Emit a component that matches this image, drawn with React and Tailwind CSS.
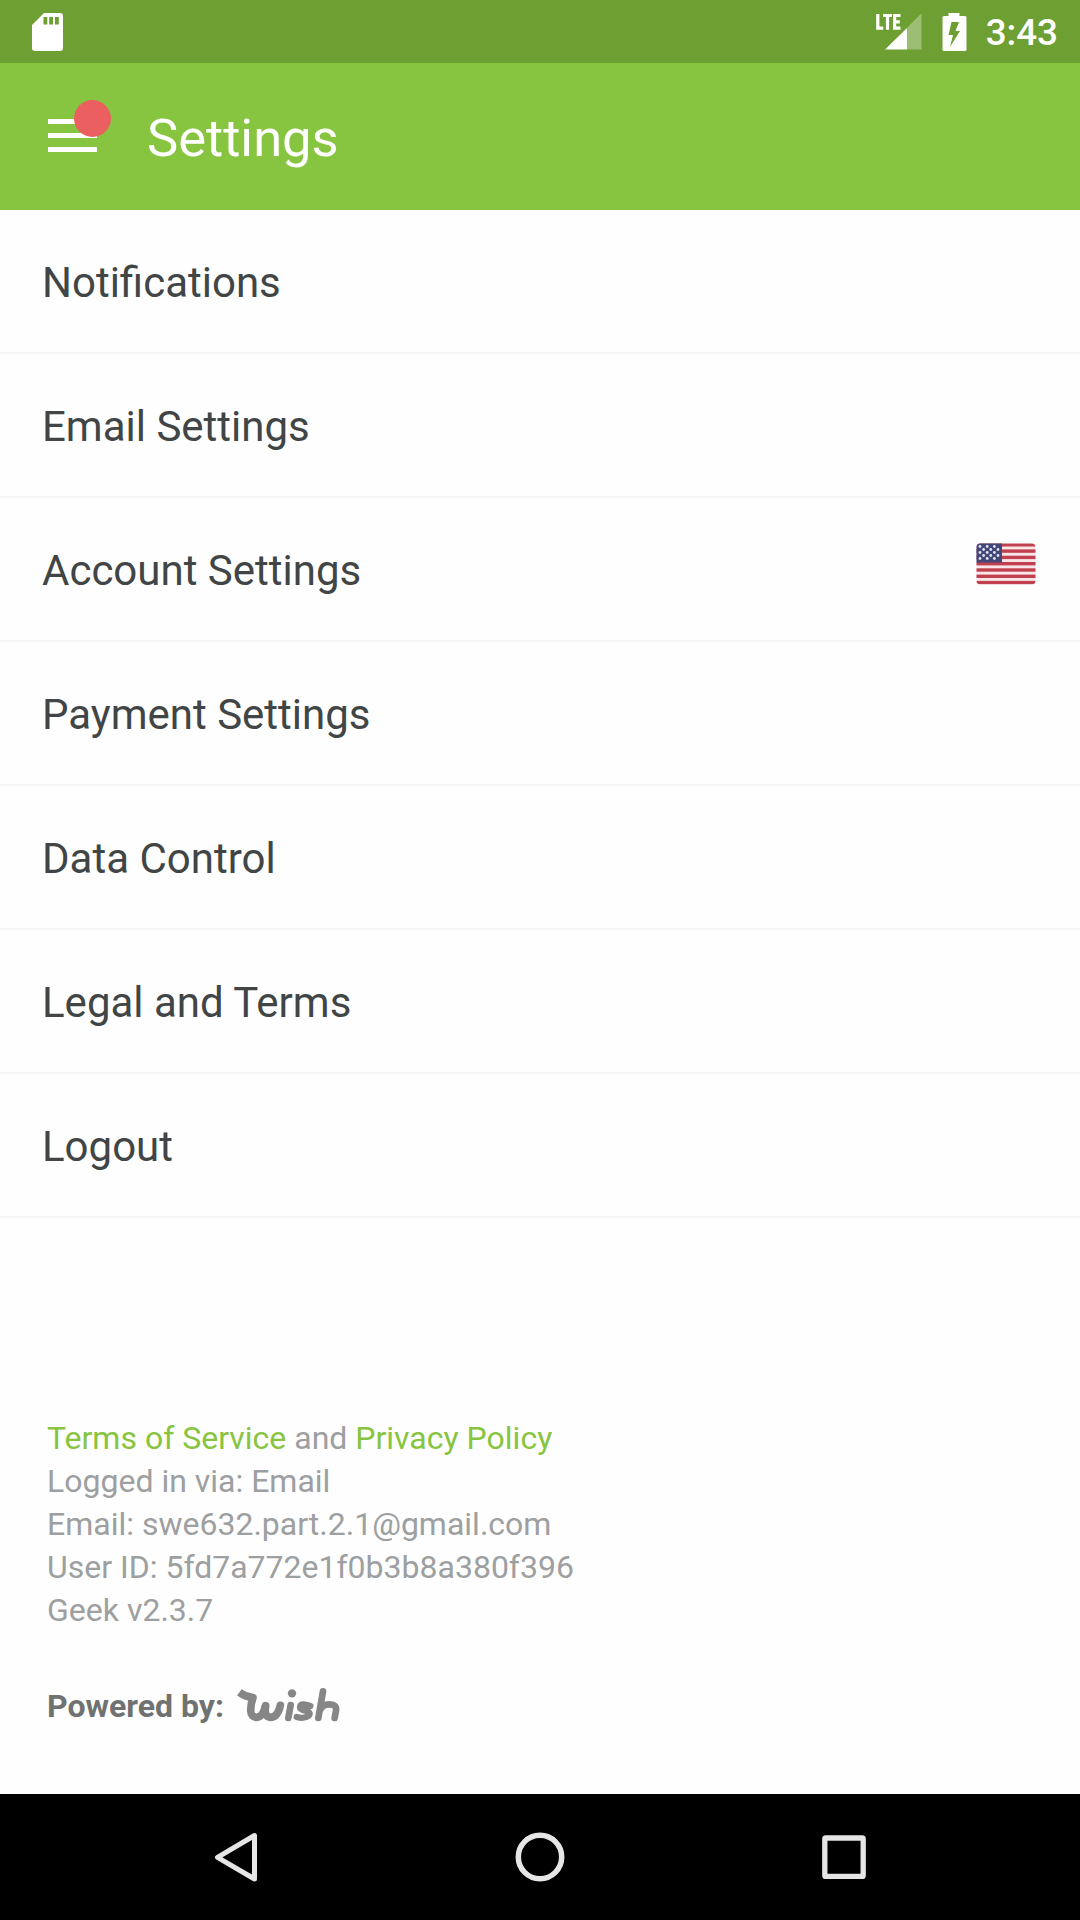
const rows = [
  { label: 'Notifications' },
  { label: 'Email Settings' },
  { label: 'Account Settings', flag: true },
  { label: 'Payment Settings' },
  { label: 'Data Control' },
  { label: 'Legal and Terms' },
  { label: 'Logout' },
];

function SdCard() {
  return (
    <svg className="ml-8 h-[38px] w-[31px]" viewBox="0 0 31 38">
      <path
        fill="#fff"
        fillRule="evenodd"
        d="M12 0H28Q31 0 31 3V35Q31 38 28 38H3Q0 38 0 35V12ZM11.5 4V11.5H15.3V4ZM17.2 4V11.5H21V4ZM23 4V11.5H26.8V4Z"
      />
    </svg>
  );
}

function Signal() {
  return (
    <svg className="h-[37px] w-[46px]" viewBox="0 0 46 37">
      <path fill="#fff" d="M9 36.500L31 15V36.500Z" />
      <path fill="#fff" fillOpacity="0.32" d="M31 15L45.500 0V36.500H31Z" />
      <g stroke="#fff" strokeWidth="3.2" fill="none">
        <path d="M1.800 1V15.200H7.300M7 2.500H16M11.500 2.500V16.800M18.600 1V16.800M18.600 2.500H24.500M18.600 8.800H23.800M18.600 15.200H24.500" />
      </g>
    </svg>
  );
}

function Battery() {
  return (
    <svg className="ml-[20px] h-[38px] w-[25px]" viewBox="0 0 25 38">
      <path
        fill="#fff"
        fillRule="evenodd"
        d="M6.500 0H17.500V3H23Q24.500 3 24.500 4.500V36.500Q24.500 38 23 38H2Q0.500 38 0.500 36.500V4.500Q0.500 3 2 3H6.500ZM9.500 9L6.500 22H11L8 34L18 18H13.500L17 9Z"
      />
    </svg>
  );
}

function Flag() {
  const stars = [];
  for (let r = 0; r < 5; r++) {
    for (let c = 0; c < 6; c++) {
      if ((r + c) % 2 === 0) stars.push([4 + c * 3.6, 3.5 + r * 3]);
    }
  }
  return (
    <svg className="mb-[10px] h-[42px] w-[60px]" viewBox="0 0 60 42">
      <defs>
        <clipPath id="flagShape">
          <rect width="59" height="41" x="0.500" y="0.500" rx="4" />
        </clipPath>
      </defs>
      <g clipPath="url(#flagShape)">
        <rect width="60" height="42" fill="#f8e6e8" />
        {[0, 1, 2, 3, 4, 5, 6].map((i) => (
          <rect key={i} y={i * 6.3 + 0.1} width="60" height="3.4" fill="#c0404f" />
        ))}
        <rect width="26" height="19.500" fill="#424777" />
        {stars.map(([x, y], i) => (
          <circle key={i} cx={x} cy={y} r="1.400" fill="#dfe3f0" />
        ))}
      </g>
    </svg>
  );
}

function WishLogo() {
  return (
    <svg className="mb-[3px] ml-[13px] h-[36px] w-[104px]" viewBox="51 50 312 108">
      <g fill="none" stroke="#868686" strokeWidth="23" strokeLinecap="round" strokeLinejoin="round">
        <path strokeLinecap="butt" d="M58 66Q76 79 99 82Q92 100 92 121Q93 142 112 141Q130 138 136 106" />
        <path d="M137 106Q131 139 151 141Q173 141 181 105" />
        <path strokeWidth="20" d="M212 104L205 143" />
        <path strokeWidth="19" d="M271 107Q241 96 240 111Q240 118 256 121Q275 126 266 136Q253 147 230 140" />
        <path strokeWidth="20" d="M309 63L295 143M299 122Q306 102 328 102Q351 102 348 121L344 143" />
      </g>
      <circle cx="216" cy="69" r="12.500" fill="#868686" />
    </svg>
  );
}

function NavBar() {
  return (
    <nav className="flex h-[126px] items-center bg-black pl-[214px]">
      <svg className="h-[52px] w-[46px]" viewBox="0 0 46 52" fill="none" stroke="#e6e6e6" strokeWidth="5" strokeLinejoin="round">
        <path d="M40.500 4.500V48L3.500 26.300Z" />
      </svg>
      <svg className="ml-[254px] h-[52px] w-[52px]" viewBox="0 0 52 52" fill="none" stroke="#e6e6e6" strokeWidth="5.500">
        <circle cx="26" cy="26" r="21.700" />
      </svg>
      <svg className="ml-[254px] h-[52px] w-[52px]" viewBox="0 0 52 52" fill="none" stroke="#e6e6e6" strokeWidth="5.300" strokeLinejoin="round">
        <rect x="4.800" y="7" width="38.400" height="38.400" rx="1" />
      </svg>
    </nav>
  );
}

export default function App() {
  return (
    <div className="flex h-[1920px] w-[1080px] flex-col overflow-hidden bg-[#fefefe] font-['Roboto',sans-serif]">
      <div className="flex h-[63px] items-center justify-between bg-[#6d9f32]">
        <SdCard />
        <div className="flex items-center pr-[22px] text-white">
          <Signal />
          <Battery />
          <span className="ml-[19px] pt-[4px] text-[36.75px] leading-none font-medium">3:43</span>
        </div>
      </div>
      <header className="flex h-[147px] items-center bg-[#87c440] pl-12 text-white">
        <div className="relative mb-[2px] flex w-[49px] flex-col gap-[9px]">
          <span className="h-[5px] bg-white" />
          <span className="h-[5px] bg-white" />
          <span className="h-[5px] bg-white" />
          <span className="absolute -top-[19px] left-[26px] size-[37px] rounded-full bg-[#ec5f60]" />
        </div>
        <h1 className="ml-[50px] pt-[3px] text-[52.5px] leading-none">Settings</h1>
      </header>
      <ul>
        {rows.map((row) => (
          <li
            key={row.label}
            className="flex h-[144px] items-center justify-between border-b-2 border-[#f4f5f5] pr-[44px] pl-[42px] text-[42px] text-[#414545]"
          >
            <span className="pt-[3px]">{row.label}</span>
            {row.flag && <Flag />}
          </li>
        ))}
      </ul>
      <footer className="mt-[199px] pl-[47px] text-[32px] leading-[43px] text-[#9d9fa0]">
        <p>
          <span className="text-[#87c440]">Terms of Service</span> and{' '}
          <span className="text-[#87c440]">Privacy Policy</span>
        </p>
        <p>Logged in via: Email</p>
        <p>Email: swe632.part.2.1@gmail.com</p>
        <p>User ID: 5fd7a772e1f0b3b8a380f396</p>
        <p>Geek v2.3.7</p>
        <div className="mt-[53px] flex items-center">
          <span className="font-bold text-[#707272]">Powered by:</span>
          <WishLogo />
        </div>
      </footer>
      <div className="mt-auto">
        <NavBar />
      </div>
    </div>
  );
}
